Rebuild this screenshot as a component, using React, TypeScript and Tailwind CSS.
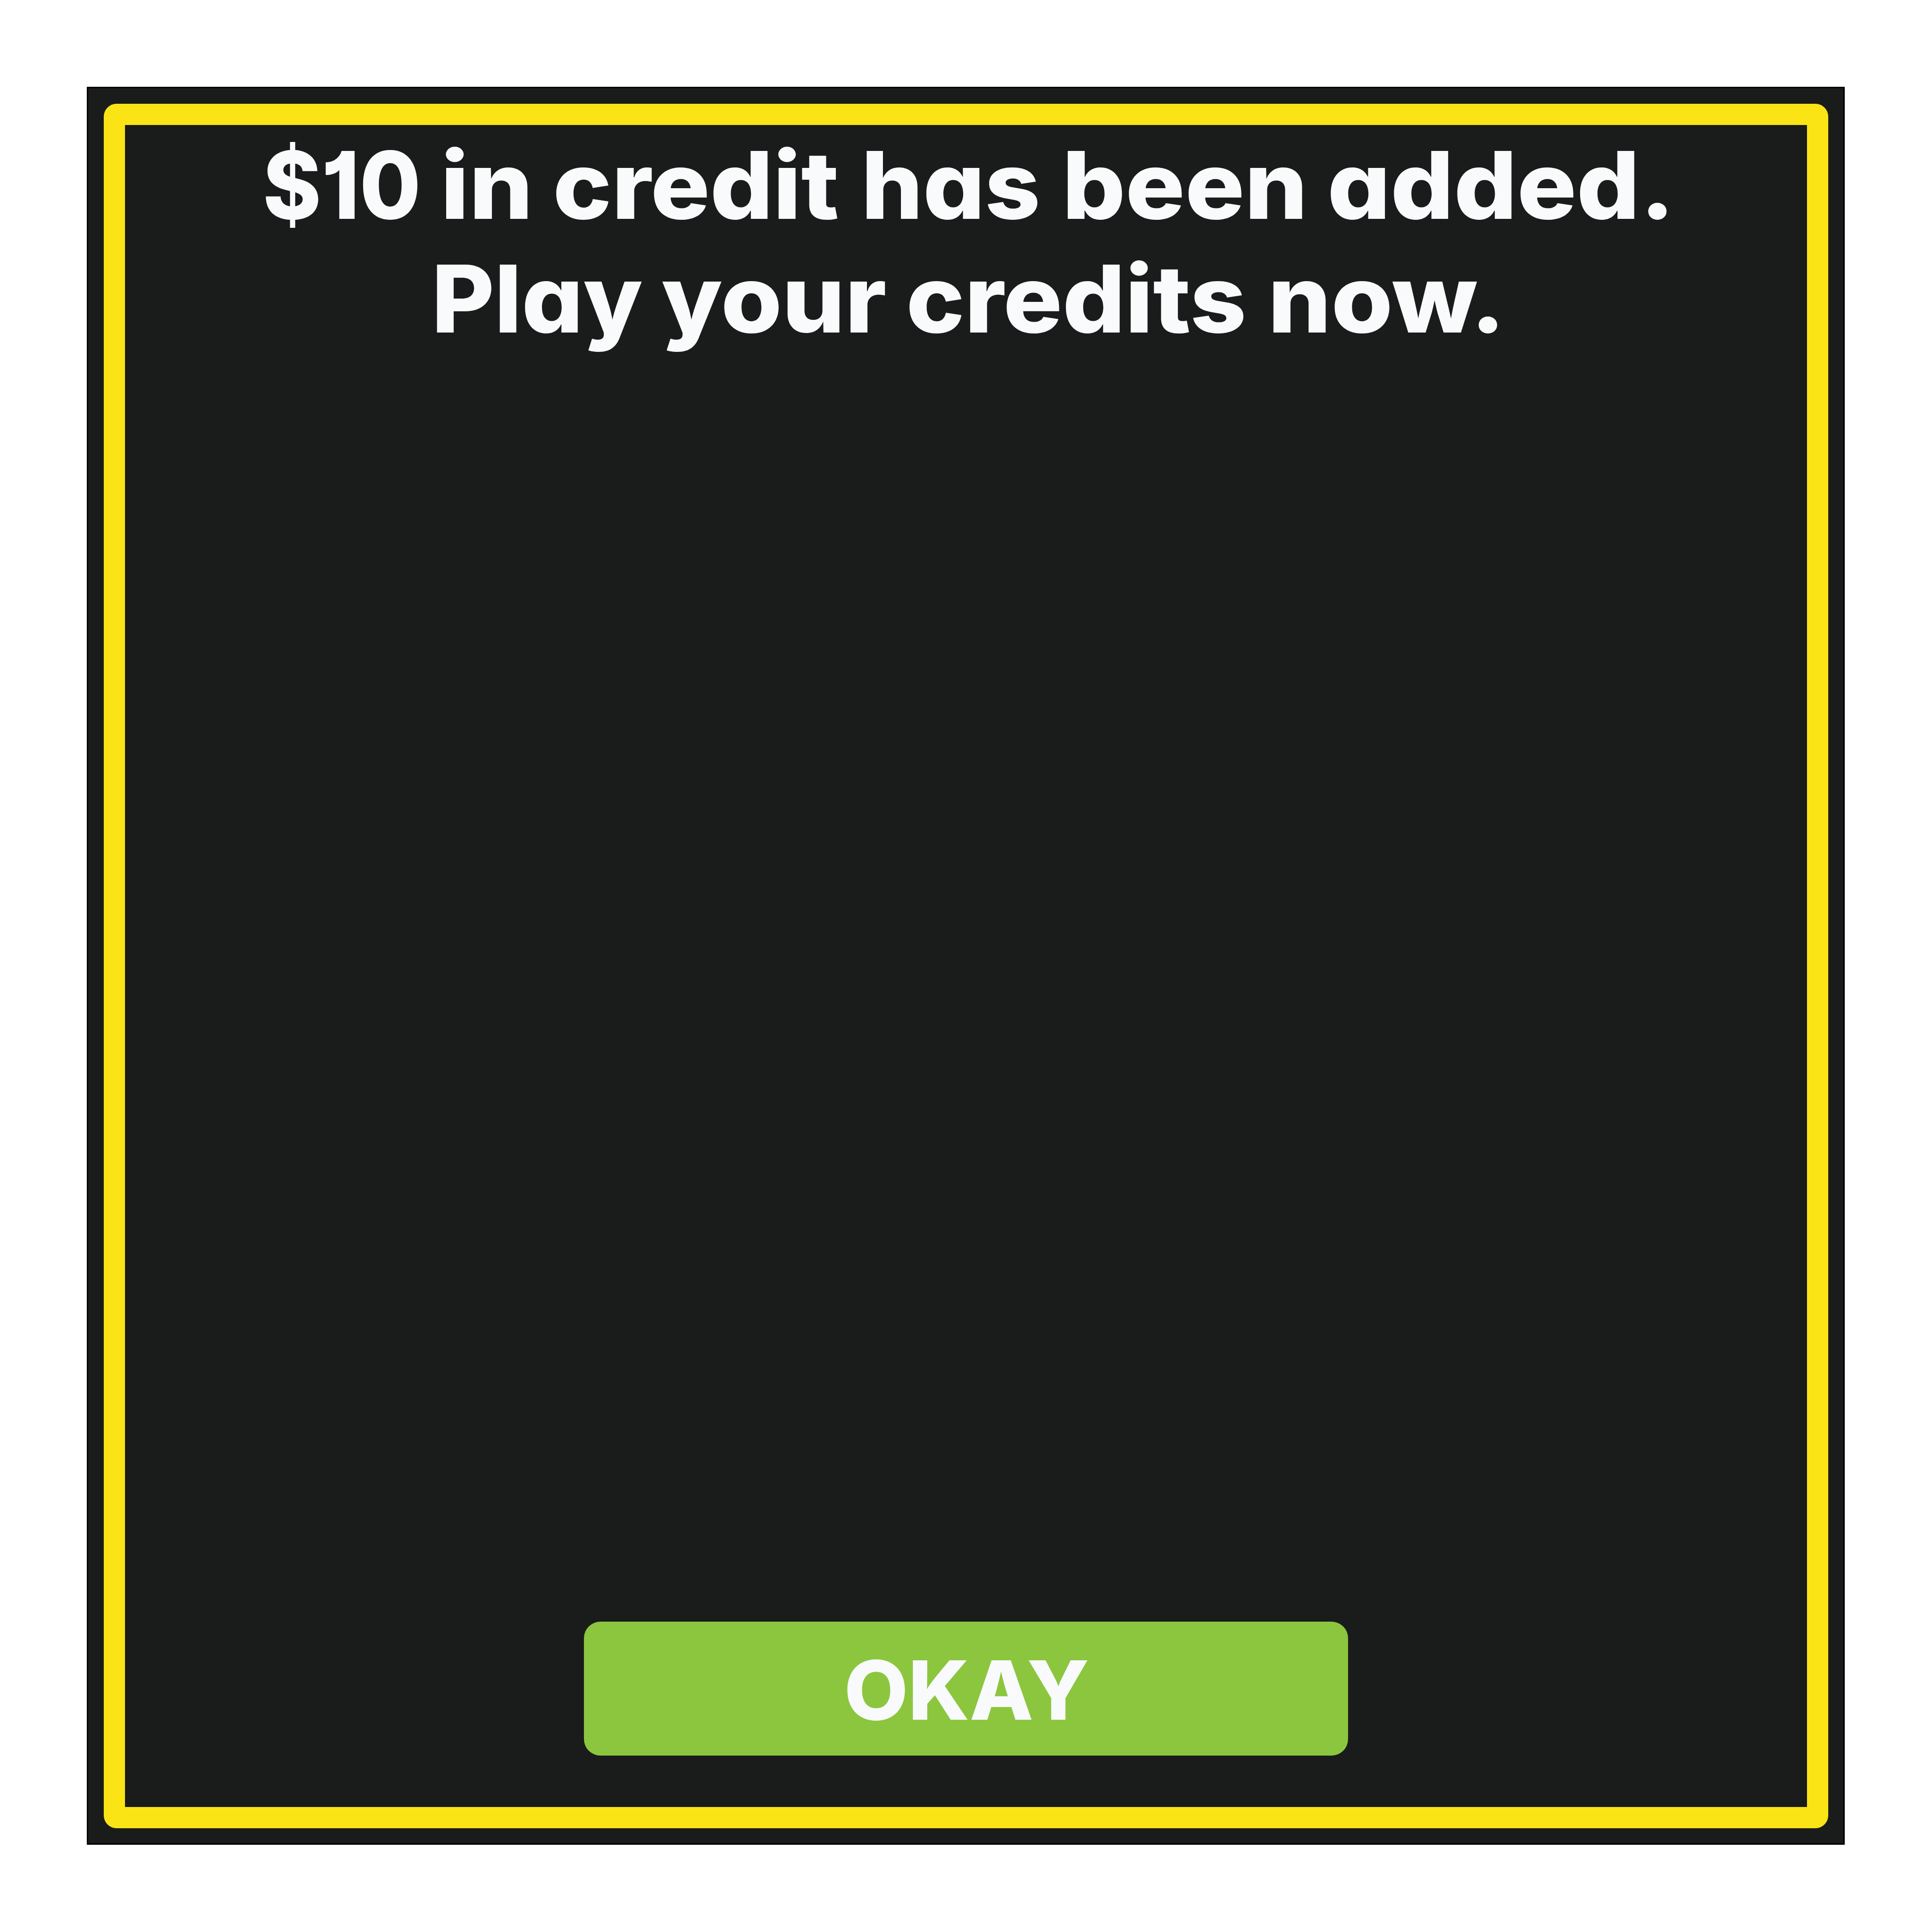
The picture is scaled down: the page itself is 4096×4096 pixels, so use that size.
import React from "react";

const Message = () => {
  return (
    <h1 className="text-[198px] leading-[241px] font-extrabold text-[#f9fafc] whitespace-nowrap">
      <span className="flex pl-[292px]">
        <span className="w-[377px]">
          <span className="inline-block origin-left scale-x-[0.95]">$10</span>
        </span>
        <span className="w-[238px]">
          <span className="inline-block origin-left scale-x-[1.078]">in</span>
        </span>
        <span className="w-[654px]">
          <span className="inline-block origin-left scale-x-[1.06]">credit</span>
        </span>
        <span className="w-[426px]">
          <span className="inline-block origin-left scale-x-[1.039]">has</span>
        </span>
        <span className="w-[562px]">
          <span className="inline-block origin-left scale-x-[1.062]">been</span>
        </span>
        <span className="w-[740px]">
          <span className="inline-block origin-left scale-x-[1.062]">added.</span>
        </span>
      </span>
      <span className="flex pl-[650px]">
        <span className="w-[487px]">
          <span className="inline-block origin-left scale-x-[1.032]">Play</span>
        </span>
        <span className="w-[519px]">
          <span className="inline-block origin-left scale-x-[1.06]">your</span>
        </span>
        <span className="w-[767px]">
          <span className="inline-block origin-left scale-x-[1.054]">credits</span>
        </span>
        <span className="w-[500px]">
          <span className="inline-block origin-left scale-x-[1.067]">now.</span>
        </span>
      </span>
    </h1>
  );
};

const OkayButton = () => {
  return (
    <button className="mx-auto flex h-[284px] w-[1620px] items-center justify-center rounded-[35px] bg-[#8cc63f] pt-[7px] pl-[2px]">
      <span className="scale-x-[1.018] text-[173px] leading-none font-extrabold text-[#f9fafc]">
        OKAY
      </span>
    </button>
  );
};

const App = () => {
  return (
    <div className="h-[4096px] w-[4096px] bg-white pt-[184px] pl-[184px] font-['Inter',sans-serif] [font-feature-settings:'cv11','cv01']">
      <div className="h-[3727px] w-[3727px] border-[3px] border-black bg-[#1a1c1b] p-[33px]">
        <div className="flex h-[3656px] w-[3656px] flex-col justify-between rounded-[27px] border-[45px] border-[#fbe415] pt-[7px] pb-[109px]">
          <Message />
          <OkayButton />
        </div>
      </div>
    </div>
  );
};

export default App;
